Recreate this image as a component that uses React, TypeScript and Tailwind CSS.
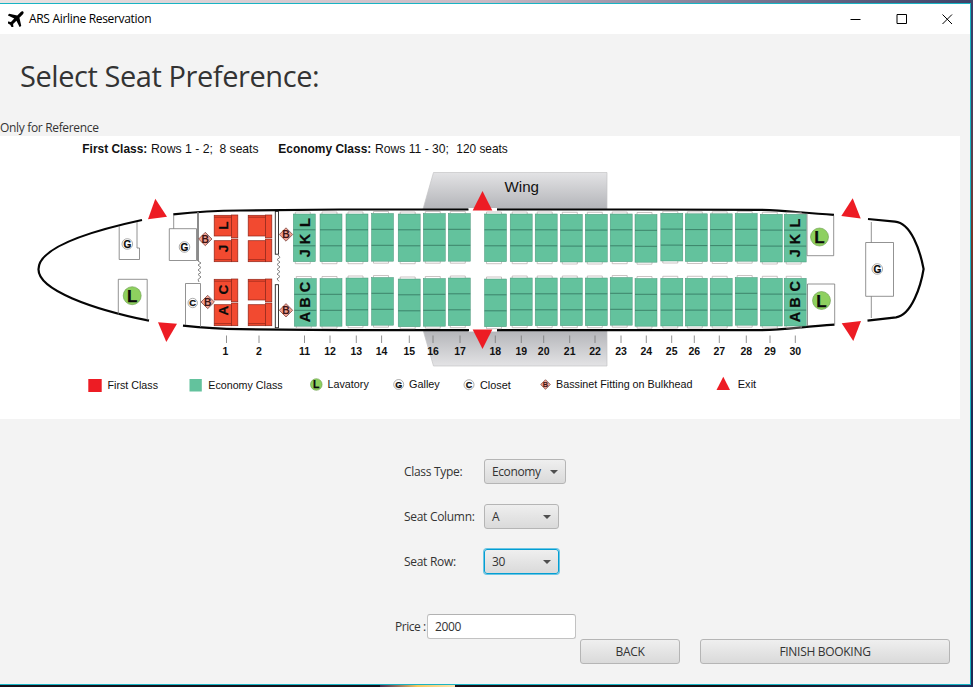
import React from "react";

const UI = "font-['Open_Sans','Noto_Sans',sans-serif]";

// [row, seat x, top block y, bottom block y, tick x]
const ECONOMY: [number, number, number, number, number][] = [
  [11, 293.3, 214, 278.5, 304.5],
  [12, 320, 214, 278.5, 330],
  [13, 346, 214, 278, 356.3],
  [14, 371.5, 213.5, 277.5, 381.6],
  [15, 398.2, 214, 279, 409.3],
  [16, 423.3, 213.5, 278.5, 433],
  [17, 448.3, 213.5, 278, 460],
  [18, 484.5, 214, 279, 495.3],
  [19, 510.2, 214, 278, 521.3],
  [20, 535.2, 214, 278, 543.7],
  [21, 560.3, 214.3, 278, 569.7],
  [22, 585.3, 214.3, 278, 595],
  [23, 610.2, 214, 277.5, 621],
  [24, 635, 214.5, 278.5, 646.3],
  [25, 660.8, 213.3, 278.3, 671.7],
  [26, 685.3, 213.8, 278.3, 694.3],
  [27, 710.2, 213.8, 278.3, 719.3],
  [28, 735.2, 213.5, 277.5, 746.3],
  [29, 760.3, 214.3, 278.3, 770],
  [30, 784.2, 214.3, 278.3, 795.3],
];

function Bench({ x, y }: { x: number; y: number }) {
  return (
    <g>
      <path d={`M${x + 2} ${y}v-2h15v2M${x + 2} ${y + 47.7}v2h15v-2`} fill="none" stroke="#b5a9a9" strokeWidth="0.7" />
      <rect x={x} y={y} width="22" height="47.7" fill="#63c29d" stroke="#4b957a" strokeWidth="0.5" />
      <path d={`M${x} ${y + 15.8}h22M${x} ${y + 31.8}h22`} stroke="#2f6f5a" strokeWidth="0.75" />
    </g>
  );
}

function FirstPair({ x, y }: { x: number; y: number }) {
  return (
    <g stroke="#8f2418" strokeWidth="0.7" fill="#f24a30">
      <rect x={x} y={y + 0.3} width="17.3" height="20.7" />
      <rect x={x} y={y + 25.7} width="17.3" height="21" />
      <rect x={x + 17.3} y={y} width="6.3" height="22.7" />
      <rect x={x + 17.3} y={y + 24} width="6.3" height="22.7" />
      <path d={`M${x} ${y + 2.2}h17M${x} ${y + 44.6}h17`} />
    </g>
  );
}

function SideLetter({ x, y, children, size = 14.5 }: { x: number; y: number; children: string; size?: number }) {
  return (
    <text
      transform={`translate(${x} ${y}) rotate(-90)`}
      textAnchor="middle"
      fontSize={size}
      fontWeight="700"
      fill="#0a0a0a"
      stroke="#0a0a0a"
      strokeWidth="0.25"
    >
      {children}
    </text>
  );
}

function Badge({ x, y, r, letter, green, size }: { x: number; y: number; r: number; letter: string; green?: boolean; size: number }) {
  return (
    <g>
      <circle cx={x} cy={y} r={r} fill={green ? "#8ed05f" : "#fff"} stroke={green ? "#6a9a4c" : "#777"} strokeWidth="0.6" />
      <text
        x={x}
        y={y + size * 0.36}
        textAnchor="middle"
        fontSize={size}
        fontWeight="700"
        fill="#0a0a0a"
        stroke="#0a0a0a"
        strokeWidth="0.25"
      >
        {letter}
      </text>
    </g>
  );
}

function Bassinet({ x, y, r = 6.7 }: { x: number; y: number; r?: number }) {
  return (
    <g>
      <path d={`M${x - r} ${y}L${x} ${y - r}L${x + r} ${y}L${x} ${y + r}Z`} fill="#f2a294" stroke="#6b3a34" strokeWidth="0.7" />
      <text x={x} y={y + r * 0.54} textAnchor="middle" fontSize={r * 1.55} fontWeight="700" fill="#3d1512">
        B
      </text>
    </g>
  );
}

function SeatMap() {
  return (
    <svg
      width="960"
      height="283"
      viewBox="0 136 960 283"
      className="block shrink-0 bg-white font-['Liberation_Sans',Arial,sans-serif]"
      fill="#111"
    >
      <defs>
        <linearGradient id="wingTop" x1="0" y1="0" x2="0" y2="1">
          <stop offset="0" stopColor="#e3e3e5" />
          <stop offset="1" stopColor="#b3b4b8" />
        </linearGradient>
        <linearGradient id="wingBottom" x1="0" y1="0" x2="0" y2="1">
          <stop offset="0" stopColor="#b3b4b8" />
          <stop offset="1" stopColor="#e3e3e5" />
        </linearGradient>
      </defs>

      <g fontSize="13">
        <text x="82.3" y="153" fontWeight="700" textLength="65" lengthAdjust="spacingAndGlyphs">First Class:</text>
        <text x="151" y="153" textLength="62" lengthAdjust="spacingAndGlyphs">Rows 1 - 2;</text>
        <text x="219.5" y="153" textLength="39" lengthAdjust="spacingAndGlyphs">8 seats</text>
        <text x="278.3" y="153" fontWeight="700" textLength="93" lengthAdjust="spacingAndGlyphs">Economy Class:</text>
        <text x="375" y="153" textLength="74" lengthAdjust="spacingAndGlyphs">Rows 11 - 30;</text>
        <text x="456.3" y="153" textLength="51.5" lengthAdjust="spacingAndGlyphs">120 seats</text>
      </g>

      <path d="M433.5 172.5H607V209H423Z" fill="url(#wingTop)" stroke="#c4c4c6" strokeWidth="0.7" />
      <path d="M423 330H607V366H433.5Z" fill="url(#wingBottom)" stroke="#c4c4c6" strokeWidth="0.7" />
      <rect x="468" y="208" width="29" height="3" fill="#fff" />
      <rect x="468" y="329" width="29" height="2.6" fill="#fff" />
      <text x="504.5" y="192" fontSize="15" textLength="34.5" lengthAdjust="spacingAndGlyphs">Wing</text>

      <g fill="none" stroke="#050505" strokeWidth="2.2">
        <path d="M142 220C105 228 38 245 38.5 269.5C38.5 290 92 309 149 320.7" />
        <path d="M173.3 214.3C195 212 210 210.7 240 210.5L340 209.5H468.5" />
        <path d="M497 209.5L640 209.5L760 209.8C785 210.5 800 212.7 834 214.8" />
        <path d="M183 325.7C205 328 220 329 240 329.2L340 330.2H469" />
        <path d="M497 330.2H760C785 329.5 800 327 834.5 324.7" />
        <path d="M868 219L895 221.6C911 223 920 250 923.6 269C921 285 912 315 896 317.3L867.5 320.7" />
      </g>

      <g fill="none" stroke="#777" strokeWidth="0.8">
        <path d="M119.2 226V259.5H139.5V248H137V222M118.3 314.5V279.3H147.2V320" />
        <path d="M173.7 215V228.7M169.3 228.7H196.5V260.5H169.3Z" />
        <path d="M185.5 325V283.5H200.5V327" />
        <path d="M807 213.5V255.7H833.7V215.5M807.5 326V284H834.7V324.5" />
        <path d="M871.3 222V242.5M871.3 296.3V318M865.7 242.5H893.5V296.3H865.7Z" />
      </g>
      <path d="M198 212V261" stroke="#777" strokeWidth="1.7" />
      <g fill="none" stroke="#777" strokeWidth="0.9">
        <path d="M198 261l3 2-3 2 3 2.5-3 2.5 3 2.5-3 2 3 2.5-3 2.5 1 2.5" />
        <path d="M278 255l2 2.3-3 2.4 3 2.4-3 2.4 3 2.4-3 2.4 3 2.4-3 2.4 3 2.4-3 2.4 2 2.5" />
      </g>
      <g fill="#fff" stroke="#222" strokeWidth="0.9">
        <rect x="275.3" y="211.5" width="3.2" height="42.7" />
        <rect x="275.3" y="284.7" width="3.2" height="43" />
      </g>

      {[214.2, 248.2].map((x) => (
        <g key={x}>
          <FirstPair x={x} y={215} />
          <FirstPair x={x} y={279} />
        </g>
      ))}
      {ECONOMY.map(([row, x, top, bottom]) => (
        <g key={row}>
          <Bench x={x} y={top} />
          <Bench x={row === 11 ? x + 1 : x} y={bottom} />
        </g>
      ))}

      <SideLetter x={228} y={225.5} size={13.5}>L</SideLetter>
      <SideLetter x={228} y={248.5} size={13.5}>J</SideLetter>
      <SideLetter x={227.5} y={289.5} size={13.5}>C</SideLetter>
      <SideLetter x={227.5} y={310.7} size={13.5}>A</SideLetter>
      {[309.9, 800.2].map((x, i) => (
        <g key={x}>
          <SideLetter x={x} y={222.7 + i * 0.3}>L</SideLetter>
          <SideLetter x={x} y={239}>K</SideLetter>
          <SideLetter x={x} y={253.3}>J</SideLetter>
          <SideLetter x={x} y={287 - i * 0.7}>C</SideLetter>
          <SideLetter x={x} y={302.5}>B</SideLetter>
          <SideLetter x={x} y={317}>A</SideLetter>
        </g>
      ))}

      <Bassinet x={205.3} y={239} />
      <Bassinet x={207.7} y={302} />
      <Bassinet x={286} y={234.5} />
      <Bassinet x={286} y={310.3} />

      <Badge x={127.3} y={244} r={5.3} letter="G" size={10} />
      <Badge x={184.5} y={247} r={5.3} letter="G" size={10} />
      <Badge x={192.7} y={303} r={4.7} letter="C" size={9.5} />
      <Badge x={877.3} y={269} r={5.3} letter="G" size={10} />
      <Badge x={132.2} y={295.7} r={9} letter="L" size={17} green />
      <Badge x={819.5} y={237} r={9} letter="L" size={17} green />
      <Badge x={821.5} y={300.5} r={9} letter="L" size={17} green />

      <g fill="#ed1c24">
        <path d="M155.3 198.7L148 219.3L167 216.7Z" />
        <path d="M158 322.3L177 323.7L166.3 342Z" />
        <path d="M482.5 191L472.7 210.5H492.3Z" />
        <path d="M472.7 329.5H492.3L482.5 349Z" />
        <path d="M852.7 198.3L841.3 216L860.7 218.5Z" />
        <path d="M841.7 323.3L861 321L853.3 341Z" />
      </g>

      <g fontSize="10.5" fontWeight="700" textAnchor="middle">
        <path d="M226.5 335.5v7.5M259 335.5v7.5" stroke="#777" strokeWidth="0.8" />
        <text x="225.3" y="354.7">1</text>
        <text x="259" y="354.7">2</text>
        {ECONOMY.map(([row, , , , tick]) => (
          <g key={row}>
            <path d={`M${tick} 335.5v7.5`} stroke="#777" strokeWidth="0.8" />
            <text x={tick} y="354.7">{row}</text>
          </g>
        ))}
      </g>

      <g fontSize="11.5">
        <rect x="88.3" y="379" width="13.4" height="13" fill="#ed1c24" />
        <text x="107.5" y="389" textLength="50.5" lengthAdjust="spacingAndGlyphs">First Class</text>
        <rect x="189.5" y="379" width="12.3" height="12.5" fill="#63c29d" />
        <text x="208.3" y="389" textLength="74.3" lengthAdjust="spacingAndGlyphs">Economy Class</text>
        <Badge x={316.3} y={384.5} r={5.8} letter="L" size={10.5} green />
        <text x="327.5" y="388.3" textLength="41.3" lengthAdjust="spacingAndGlyphs">Lavatory</text>
        <Badge x={398.7} y={384.5} r={5} letter="G" size={9} />
        <text x="409" y="388.3" textLength="30.8" lengthAdjust="spacingAndGlyphs">Galley</text>
        <Badge x={469} y={384.7} r={5} letter="C" size={9} />
        <text x="480" y="389" textLength="30.8" lengthAdjust="spacingAndGlyphs">Closet</text>
        <Bassinet x={545.5} y={384.5} r={4.8} />
        <text x="556" y="388.3" textLength="136.5" lengthAdjust="spacingAndGlyphs">Bassinet Fitting on Bulkhead</text>
        <path d="M723.3 376.8L716.5 390H730Z" fill="#ed1c24" />
        <text x="737.7" y="388.3" textLength="18.5" lengthAdjust="spacingAndGlyphs">Exit</text>
      </g>
    </svg>
  );
}

function Combo({ label, value, width, focused }: { label: string; value: string; width: string; focused?: boolean }) {
  return (
    <div className="flex h-[25px] items-center">
      <span className="w-20 whitespace-nowrap tracking-[-0.3px]">{label}</span>
      <button
        className={`flex h-[25px] items-center justify-between rounded-[3px] border bg-linear-to-b from-[#efefef] to-[#dadada] pl-[7px] pr-[7px] ${width} ${
          focused ? "border-[#039ed3] shadow-[0_0_0_1px_#6cc5e3]" : "border-[#b5b5b5]"
        }`}
      >
        <span className="tracking-[-0.4px]">{value}</span>
        <svg width="8" height="4" viewBox="0 0 8 4" fill="#4f4f4f">
          <path d="M0 0H8L4 4Z" />
        </svg>
      </button>
    </div>
  );
}

export default function App() {
  return (
    <div className={`flex h-[687px] w-[973px] flex-col overflow-hidden bg-[#20284a] text-xs text-[#333] ${UI}`}>
      <div className="h-[3px] shrink-0 bg-linear-to-r from-[#e9e3e2] via-[#c9b9c4] to-[#3e4268]" />
      <div className="flex h-[682px] shrink-0">
        <div className="flex w-[971px] flex-col border-y border-r border-[#18b4c4] bg-[#f3f3f3]">
          <header className="flex h-[30px] shrink-0 items-center bg-white text-black">
            <svg className="ml-2 size-4" viewBox="0 0 24 24">
              <path
                transform="rotate(45 12 12)"
                d="M12 -3.5c1.5 0 2.3 1.6 2.3 3.6V7l10.4 6.6v3.2L14.3 13.4v7l3.4 2.8v2.6L12 24.2l-5.7 1.6v-2.6l3.4-2.8v-7L-.7 16.8v-3.2L9.7 7V.1c0-2 .8-3.6 2.3-3.6z"
                fill="#000"
              />
            </svg>
            <span className="ml-[5px] tracking-[-0.32px]">ARS Airline Reservation</span>
            <div className="ml-auto mr-[17px] flex items-center gap-[35px]">
              <svg width="11" height="11" viewBox="0 0 11 11" stroke="#000"><path d="M0.5 5.5H10.5" /></svg>
              <svg width="11" height="11" viewBox="0 0 11 11" stroke="#000" fill="none"><path d="M1 .5H10.5V9.5H1Z" /></svg>
              <svg width="11" height="11" viewBox="0 0 11 11" stroke="#000"><path d="M.5 .5L10 10M10 .5L.5 10" /></svg>
            </div>
          </header>
          <h1 className="mt-[22px] h-10 shrink-0 pl-5 text-[29px] leading-10 tracking-[-0.43px]">Select Seat Preference:</h1>
          <p className="mt-6 h-4 shrink-0 leading-4 tracking-[-0.33px]">Only for Reference</p>
          <SeatMap />
          <div className="ml-[404px] mt-10 flex flex-col gap-5">
            <Combo label="Class Type:" value="Economy" width="w-[82px]" />
            <Combo label="Seat Column:" value="A" width="w-[75px]" />
            <Combo label="Seat Row:" value="30" width="w-[75px]" focused />
          </div>
          <div className="ml-[395px] mt-10 flex h-[25px] items-center">
            <label className="w-8 whitespace-nowrap tracking-[-0.45px]">Price :</label>
            <input
              readOnly
              defaultValue="2000"
              className="h-[25px] w-[149px] rounded-[3px] border border-[#c2c2c2] border-t-[#b2b2b2] bg-white px-[7px] tracking-[-0.35px] outline-none"
            />
          </div>
          <div className="ml-[580px] flex gap-5">
            <button className="h-[25px] w-[100px] rounded-[3px] border border-[#b5b5b5] bg-linear-to-b from-[#efefef] to-[#dadada] tracking-[-0.3px]">BACK</button>
            <button className="h-[25px] w-[250px] rounded-[3px] border border-[#b5b5b5] bg-linear-to-b from-[#efefef] to-[#dadada] tracking-[-0.3px]">FINISH BOOKING</button>
          </div>
        </div>
        <div className="flex-1 bg-linear-to-b from-[#3c3f68] from-10% via-[#7a3428] via-35% to-[#1f2a55] to-60%" />
      </div>
      <div className="flex flex-1">
        <div className="w-[380px] bg-[#15101a]" />
        <div className="w-[75px] bg-linear-to-r from-[#4a2a4a] via-[#f4c860] to-[#f8e2b0]" />
        <div className="flex-1 bg-linear-to-r from-[#1c1018] via-[#130d12] to-[#1d2c5c]" />
      </div>
    </div>
  );
}
